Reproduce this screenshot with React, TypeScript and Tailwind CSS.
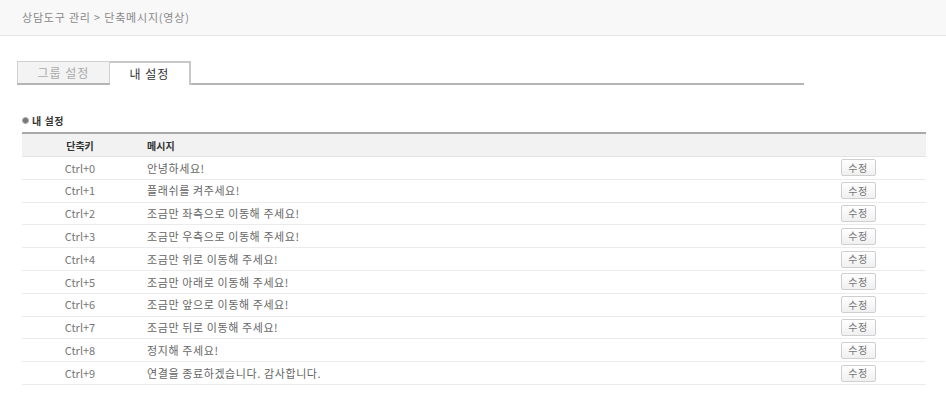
const rows = [
  { key: "Ctrl+0", msg: "안녕하세요!" },
  { key: "Ctrl+1", msg: "플래쉬를 켜주세요!" },
  { key: "Ctrl+2", msg: "조금만 좌측으로 이동해 주세요!" },
  { key: "Ctrl+3", msg: "조금만 우측으로 이동해 주세요!" },
  { key: "Ctrl+4", msg: "조금만 위로 이동해 주세요!" },
  { key: "Ctrl+5", msg: "조금만 아래로 이동해 주세요!" },
  { key: "Ctrl+6", msg: "조금만 앞으로 이동해 주세요!" },
  { key: "Ctrl+7", msg: "조금만 뒤로 이동해 주세요!" },
  { key: "Ctrl+8", msg: "정지해 주세요!" },
  { key: "Ctrl+9", msg: "연결을 종료하겠습니다. 감사합니다." },
]

export default function App() {
  return (
    <div
      className="w-[946px] h-[400px] bg-white text-[11px] text-[#666]"
      style={{ fontFamily: '"Noto Sans CJK KR", "Liberation Sans", sans-serif' }}
    >
      {/* breadcrumb */}
      <div className="h-[36px] bg-[#f8f8f8] border-b border-[#e6e6e6] pl-[22px] flex items-center text-[11px] text-[#888] tracking-[0.8px]">
        상담도구 관리 &gt; 단축메시지(영상)
      </div>

      {/* tabs */}
      <div className="pl-[17px] pt-[25px]">
        <div className="flex items-end w-[787px] border-b-2 border-[#b5b5b5]">
          <div className="w-[93px] h-[22px] bg-[#f3f3f3] border border-b-0 border-[#d0d0d0] flex items-center justify-center text-[12px] text-[#aaa] tracking-[1px]">
            그룹 설정
          </div>
          <div className="w-[81px] h-[24px] -mb-[2px] bg-white border-2 border-b-0 border-l-0 border-[#c8c8c8] flex items-center justify-center text-[12px] text-[#333] tracking-[1px]">
            내 설정
          </div>
        </div>
      </div>

      {/* section */}
      <div className="pl-[22px] pt-[29px]">
        <div className="flex items-center gap-[3px] text-[10px] font-bold text-[#333] h-[12px] tracking-[0.5px]">
          <span className="w-[7px] h-[7px] rounded-full bg-[#777] border border-[#aaa] inline-block" />
          <span>내 설정</span>
        </div>

        <div className="w-[904px] mt-[6px]">
          <div className="flex h-[25px] items-center bg-[#f2f2f2] border-t-2 border-[#a9a9a9] border-b border-b-[#e3e3e3] font-bold text-[#333] text-[10px]">
            <div className="w-[116px] text-center">단축키</div>
            <div className="pl-[9px] flex-1">메시지</div>
            <div className="w-[136px]" />
          </div>
          {rows.map((r) => (
            <div key={r.key} className="flex h-[22.8px] items-center border-b border-[#ebebeb]">
              <div className="w-[116px] text-center text-[#777]">{r.key}</div>
              <div className="pl-[9px] flex-1 text-[#666] tracking-[0.6px]">{r.msg}</div>
              <div className="w-[136px] flex justify-center">
                <button className="w-[35px] h-[17px] border border-[#cfcfcf] rounded-[2px] bg-gradient-to-b from-white to-[#f0f0f0] text-[10px] text-[#777] leading-none tracking-[0.5px]">
                  수정
                </button>
              </div>
            </div>
          ))}
        </div>
      </div>
    </div>
  )
}
